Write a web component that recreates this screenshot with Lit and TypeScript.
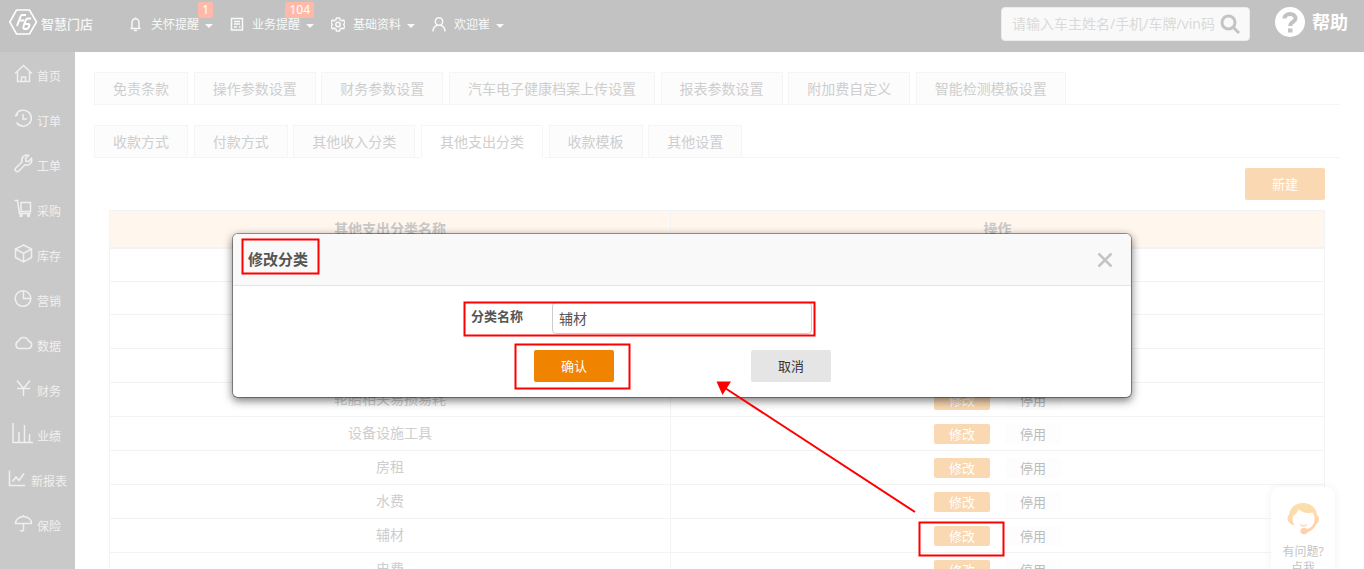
import { LitElement, html, css, svg, nothing } from "lit";
import { customElement, state } from "lit/decorators.js";

const sideIcons = {
  home: svg`<path d="M1 9.5 9.5 1.5 18 9.5M3.5 8v9.5h12V8M7.5 17v-4h4v4"/>`,
  clock: svg`<path d="M2.2 5.5A8 8 0 1 1 2.6 13.5M1 7l3-1.500M9 5v5h4"/>`,
  wrench: svg`<path d="M14.500 1.500A5 5 0 0 0 8 7.800L1.800 14a1.900 1.900 0 0 0 3 3L11 10.800A5 5 0 0 0 17.500 4.500L14.500 7.500 11.800 7 11.500 4.500Z"/>`,
  cart: svg`<path d="M.5 1.500H3.500L5.500 14.500H17M7 3.500h9.500v9H7z"/><circle cx="7" cy="16.500" r="1"/><circle cx="14.500" cy="16.500" r="1"/>`,
  box: svg`<path d="M9.500 1 17.500 5v8.500L9.500 18 1.500 13.500V5ZM1.500 5 9.500 9.500 17.500 5M9.500 9.500V18"/>`,
  pie: svg`<circle cx="9" cy="9.500" r="7.800"/><path d="M9.500 2v7.500H17"/>`,
  cloud: svg`<path d="M4.500 14.500a4 4 0 0 1 .2-7.500 5.200 5.200 0 0 1 9.800 0 3.800 3.800 0 0 1 0 7.500Z"/>`,
  yen: svg`<path d="M3 1.500 9.500 9.500 16 1.500M3 9.500h13M9.500 9.500V17"/>`,
  bars: svg`<path d="M-1 -1V18.500H19M5 18V8M10.500 18V1M15.500 18V10"/>`,
  line: svg`<path d="M1.500 1.500V16.500H17M4.500 12.500 8 8l3 3.500L16 4.500"/>`,
  umbrella: svg`<path d="M1.500 9.500a8 7 0 0 1 16 0ZM9.500 2.500V1M9.500 9.500V15a1.500 1.500 0 0 1-3 1"/>`,
};

const navIcons = {
  bell: svg`<path d="M1.500 11.500h10M3 11V5.500a3.500 3.800 0 0 1 7 0V11M6.500 1.500V.5M5 13.500h3"/>`,
  doc: svg`<path d="M1.500 1.500h11v11.500h-11zM4 4.500h6M4 7h6M4 10h3M9 10h1.500"/>`,
  gear: svg`<path d="M5.500 1h3l.6 1.800 1.700.9 1.900-.5 1.300 2.400L12.700 7.500 14 9.200l-1.300 2.400-1.900-.4-1.700.9L8.500 14h-3l-.6-1.900-1.700-.9-1.900.4L0 9.200 1.300 7.500 0 5.600l1.300-2.400 1.900.5 1.700-.9Z"/><circle cx="7" cy="7.500" r="2.200"/>`,
  user: svg`<circle cx="7" cy="4.500" r="3.700"/><path d="M1 14.500c0-3.500 2-5.500 4.500-6.300M13 14.500c0-3.500-2-5.500-4.500-6.300"/>`,
};

const sideItems = [
  { icon: "home", text: "首页" },
  { icon: "clock", text: "订单" },
  { icon: "wrench", text: "工单" },
  { icon: "cart", text: "采购" },
  { icon: "box", text: "库存" },
  { icon: "pie", text: "营销" },
  { icon: "cloud", text: "数据" },
  { icon: "yen", text: "财务" },
  { icon: "bars", text: "业绩" },
  { icon: "line", text: "新报表" },
  { icon: "umbrella", text: "保险" },
] as const;

const navItems: { icon: keyof typeof navIcons; text: string; badge?: string }[] = [
  { icon: "bell", text: "关怀提醒", badge: "1" },
  { icon: "doc", text: "业务提醒", badge: "104" },
  { icon: "gear", text: "基础资料" },
  { icon: "user", text: "欢迎崔" },
];

const settingTabs = [
  "免责条款", "操作参数设置", "财务参数设置", "汽车电子健康档案上传设置",
  "报表参数设置", "附加费自定义", "智能检测模板设置",
];
const financeTabs = ["收款方式", "付款方式", "其他收入分类", "其他支出分类", "收款模板", "其他设置"];

const categories = ["", "", "", "", "轮胎相关易损易耗", "设备设施工具", "房租", "水费", "辅材", "电费"];

@customElement("app-root")
export class AppRoot extends LitElement {
  @state() private activeTab = "其他支出分类";

  static styles = css`
    :host {
      display: block;
      position: relative;
      height: 100vh;
      overflow: hidden;
      background: #fff;
      font-family: "Noto Sans", "Noto Sans CJK SC", sans-serif;
      font-size: 14px;
      line-height: 20px;
      color: #c4c4c4;
    }
    * { box-sizing: border-box; }
    button, input { font-family: inherit; margin: 0; }
    button { border: 0; padding: 0; cursor: pointer; }
    a { color: inherit; text-decoration: none; }
    svg { display: block; flex: none; }
    .stroke { fill: none; stroke: currentColor; stroke-width: 1.5; }

    .topbar {
      display: flex;
      align-items: center;
      height: 52px;
      padding: 0 16px 8px 9px;
      background: #c2c2c2;
      color: #fff;
    }
    .logo { display: flex; align-items: center; gap: 3px; width: 120px; font-size: 13px; font-weight: 500; color: #f7f7f7; }
    .logo-text { padding-top: 3px; }
    .nav { display: flex; flex: 1; gap: 17px; padding-top: 4px; font-size: 12px; color: #f7faf9; }
    .nav-item { position: relative; display: flex; align-items: center; }
    .nav-text { margin: 0 6px 0 8px; padding-top: 2px; }
    .caret { border: 4px solid transparent; border-top-color: currentColor; border-bottom: 0; margin-top: 4px; }
    .badge {
      position: absolute;
      right: 0;
      bottom: 17px;
      padding: 0 4px;
      border-radius: 2px;
      background: #ffb9a9;
      color: #fff;
      font-size: 12px;
      line-height: 16px;
    }
    .search {
      display: flex;
      align-items: center;
      width: 249px;
      height: 34px;
      margin-top: 4px;
      padding: 0 9px 0 10px;
      border: 1px solid #ececec;
      border-radius: 4px;
      background: #f9f9f9;
      color: #c4c4c4;
    }
    .search-input { flex: 1; min-width: 0; padding: 0 0 2px; border: 0; outline: 0; background: none; font-size: 14px; }
    .search-input::placeholder { color: #dadada; opacity: 1; }
    .help { display: flex; align-items: center; gap: 7px; margin-left: 25px; font-size: 18px; font-weight: 700; }

    .body { display: flex; height: calc(100vh - 52px); }
    .side { flex: none; width: 75px; background: #c9c9c9; color: #f0f0f0; font-size: 12px; }
    .side-item { display: flex; align-items: center; justify-content: center; gap: 4px; height: 45px; }
    .side-text { padding-top: 5px; }
    .side-item svg { margin-bottom: 2px; }

    .main { flex: 1; min-width: 0; padding: 20px 24px 0 19px; overflow: hidden; }
    .tabs { height: 33px; margin-bottom: 20px; border-bottom: 1px solid #f5f5f5; white-space: nowrap; }
    .tab {
      display: inline-block;
      vertical-align: top;
      height: 33px;
      margin-right: 2px;
      padding: 0 18px 2px;
      border: 1px solid #f5f5f5;
      background: #fcfcfc;
      color: #cecece;
      font-size: 14px;
    }
    .tab.active { background: #fff; border-bottom-color: #fff; }
    .panel { display: flex; flex-direction: column; padding: 0 15px; margin-top: -10px; }
    .create { align-self: flex-end; width: 80px; height: 32px; padding-bottom: 2px; border-radius: 2px; background: #fad8b1; color: #fff; font-size: 13px; }

    .table { width: 100%; margin-top: 10px; border-collapse: separate; border-spacing: 0; table-layout: fixed; border-left: 1px solid #f2f3f5; border-top: 1px solid #f2f3f5; }
    .name-col { width: 561px; }
    .table th { height: 38px; padding: 0; background: #fff6ee; border-right: 1px solid #f2f3f5; border-bottom: 2px solid #f2f3f5; color: #c8c8c8; font-weight: 700; }
    .table td { height: 34px; padding: 0; border-right: 1px solid #f2f3f5; border-bottom: 1px solid #f2f3f5; text-align: center; color: #cecece; }
    .table tr:nth-child(-n + 2) td { height: 33px; }
    .table .name { padding-bottom: 2px; }
    .actions { display: flex; justify-content: center; gap: 15px; }
    .mini { width: 56px; height: 20px; border-radius: 2px; background: #fdfdfd; color: #bbb; font-size: 13px; line-height: 20px; }
    .mini.edit { background: #fad8b1; color: #fff; }

    .service {
      position: absolute;
      top: 487px;
      right: 29px;
      width: 64px;
      padding: 15px 0 8px;
      border-radius: 8px;
      background: #fff;
      box-shadow: 0 0 10px rgba(0, 0, 0, 0.06);
      color: #c4c4c4;
      font-size: 12px;
      line-height: 16px;
      text-align: center;
    }
    .service svg { margin: 0 auto 8px; }

    .overlay { position: absolute; inset: 0; display: flex; justify-content: center; align-items: flex-start; padding-top: 233px; }
    .modal {
      width: 900px;
      max-width: 100%;
      border: 1px solid rgba(0, 0, 0, 0.35);
      border-radius: 6px;
      background: #fff;
      background-clip: padding-box;
      box-shadow: 0 3px 9px rgba(0, 0, 0, 0.5);
      color: #555;
    }
    .modal-head { display: flex; align-items: center; justify-content: space-between; height: 52px; padding: 0 18px 0 15px; border-bottom: 1px solid #e5e5e5; border-radius: 5px 5px 0 0; background: #f9f9f9; }
    .modal-title { margin: 0; padding-bottom: 2px; font-size: 15px; font-weight: 700; }
    .close { background: none; color: #c4c4c4; }
    .field { display: flex; padding: 16px 0 0 238px; }
    .label { width: 81px; padding-top: 4px; font-size: 13px; font-weight: 700; }
    .input { width: 260px; height: 32px; padding: 0 6px; border: 1px solid #ccc; border-radius: 4px; outline: 0; color: #555; font-size: 14px; }
    .buttons { display: flex; gap: 137px; padding: 16px 0 15px 301px; }
    .btn { width: 80px; height: 32px; padding-bottom: 2px; border-radius: 2px; background: #e5e5e5; color: #333; font-size: 13px; }
    .btn.primary { background: #f08300; color: #fff; }

    .marks { position: absolute; top: 0; left: 0; pointer-events: none; }
  `;

  private tabs(names: string[]) {
    return html`<div class="tabs" role="tablist">
      ${names.map(
        (n) => html`<button class="tab ${n === this.activeTab ? "active" : ""}" role="tab"
          @click=${() => (this.activeTab = n)}>${n}</button> `
      )}
    </div>`;
  }

  render() {
    return html`
      <header class="topbar">
        <div class="logo">
          <svg width="29" height="28" viewBox="0 0 29 28" fill="none" stroke="#fff" stroke-width="1.600">
            <path d="M7.500 2h13L27.500 14l-7 12h-13L.8 14Z" />
            <path d="M8 18 11.500 8.500q.5-1.500 2-1.500H17M10 12.500h5" stroke-width="2" />
            <path d="M22 10.500h-3q-1.500 0-2.200 1.500l-2.300 6.500q-.7 2.500 1.500 2.500h1.500q1.500 0 2.200-1.800l.5-1.400q.6-1.800-1-1.800h-3" stroke-width="2" />
          </svg>
          <span class="logo-text">智慧门店</span>
        </div>
        <nav class="nav">
          ${navItems.map(
            (i) => html`<a class="nav-item" href="#">
              <svg class="stroke" width="14" height="15" viewBox="0 0 14 15">${navIcons[i.icon]}</svg>
              <span class="nav-text">${i.text}</span><span class="caret"></span>
              ${i.badge ? html`<span class="badge">${i.badge}</span>` : nothing}
            </a>`
          )}
        </nav>
        <div class="search">
          <input class="search-input" type="text" aria-label="搜索" placeholder="请输入车主姓名/手机/车牌/vin码" />
          <svg width="20" height="20" viewBox="0 0 20 20" fill="none" stroke="currentColor" stroke-width="3">
            <circle cx="8.500" cy="8.500" r="6.500" /><path d="M13 13l6 6" />
          </svg>
        </div>
        <a class="help" href="#">
          <svg width="30" height="30" viewBox="0 0 30 30">
            <circle cx="15" cy="15" r="15" fill="#fff" />
            <path d="M9.500 11.500C9.500 5.500 20.500 5.500 20.500 11.500c0 3.500-5.300 3.500-5.300 7.500" fill="none" stroke="#c2c2c2" stroke-width="4" />
            <path d="M13 21.500h4.500v4H13z" fill="#c2c2c2" />
          </svg>
          <span>帮助</span>
        </a>
      </header>
      <div class="body">
        <nav class="side">
          ${sideItems.map(
            (i) => html`<a class="side-item" href="#">
              <svg class="stroke" width="19" height="19" viewBox="0 0 19 19" overflow="visible">${sideIcons[i.icon]}</svg>
              <span class="side-text">${i.text}</span>
            </a>`
          )}
        </nav>
        <main class="main">
          ${this.tabs(settingTabs)} ${this.tabs(financeTabs)}
          <div class="panel">
            <button class="create">新建</button>
            <table class="table">
              <colgroup><col class="name-col" /><col /></colgroup>
              <thead>
                <tr><th>其他支出分类名称</th><th>操作</th></tr>
              </thead>
              <tbody>
                ${categories.map(
                  (c) => html`<tr>
                    <td class="name">${c}</td>
                    <td>${c
                      ? html`<div class="actions">
                          <button class="mini edit">修改</button><button class="mini">停用</button>
                        </div>`
                      : nothing}</td>
                  </tr>`
                )}
              </tbody>
            </table>
          </div>
        </main>
      </div>
      <aside class="service">
        <svg width="34" height="34" viewBox="0 0 34 34">
          <defs><linearGradient id="warm" x1="0" y1="0" x2="0" y2="1">
            <stop offset="0" stop-color="#fde0ab" /><stop offset="1" stop-color="#ffcfae" />
          </linearGradient></defs>
          <path fill="url(#warm)" d="M3 13C4 5 10 1 17 1s13 4 14 12c3 2 2.500 7-.5 9-2 4-5 7-9 8.500a3.800 3.200 0 1 1-.5-3.500c4-1 6-3.500 7-6.500 1-4 .5-8-1.500-10C20 12 15 10 12.500 7 12 11 9 12 7 14c-1 4 0 7 1.500 9-3 0-4.500-1-5.500-3-2-2-2-5 0-7Z" />
          <path d="M14 22.500q3 3 7 0" fill="none" stroke="#ffd9b8" stroke-width="1.500" />
        </svg>
        有问题?<br />点我
      </aside>
      <div class="overlay">
        <section class="modal" role="dialog" aria-labelledby="title">
          <div class="modal-head">
            <h2 class="modal-title" id="title">修改分类</h2>
            <button class="close" aria-label="关闭">
              <svg width="16" height="16" viewBox="0 0 16 16" stroke="currentColor" stroke-width="2.500"><path d="M1.500 1.500l13 13M14.500 1.500l-13 13" /></svg>
            </button>
          </div>
          <div class="field">
            <label class="label" for="name">分类名称</label>
            <input class="input" id="name" type="text" .value=${"辅材"} />
          </div>
          <div class="buttons">
            <button class="btn primary">确认</button>
            <button class="btn">取消</button>
          </div>
        </section>
      </div>
      <svg class="marks" width="1364" height="569" viewBox="0 0 1364 569" fill="none" stroke="#f00" stroke-width="2">
        <rect x="242.500" y="239.500" width="76" height="34" />
        <rect x="464.500" y="302.500" width="350" height="33" />
        <rect x="515.500" y="344.500" width="114" height="44" />
        <rect x="919.500" y="522.500" width="84" height="33" />
        <path d="M915 512 725 388" />
        <path d="M716.500 381.500H731L722.500 395Z" fill="#f00" stroke="none" />
      </svg>
    `;
  }
}
